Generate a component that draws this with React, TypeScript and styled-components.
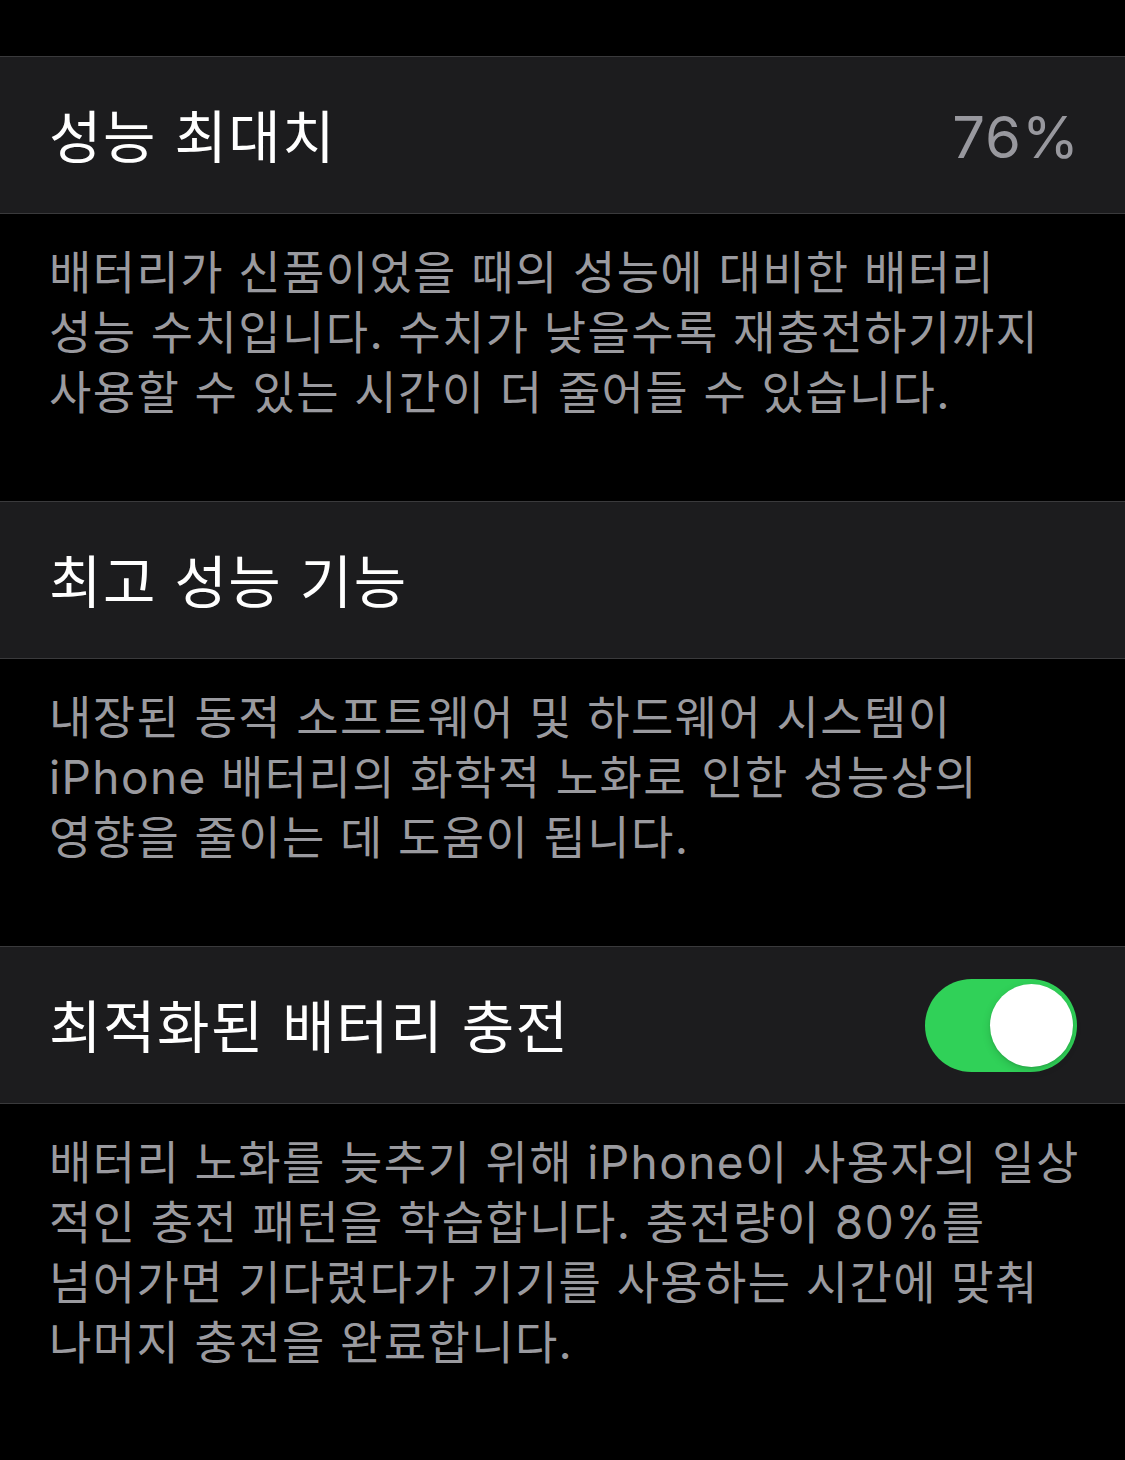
import styled, { createGlobalStyle } from "styled-components";

const GlobalStyle = createGlobalStyle`
  html, body {
    margin: 0;
    padding: 0;
    background: #000;
  }
  body {
    font-family: "Inter", "Noto Sans CJK KR", sans-serif;
    -webkit-font-smoothing: antialiased;
  }
`;

const sections = [
  {
    title: "성능 최대치",
    value: "76%",
    toggle: false,
    footer: [
      "배터리가 신품이었을 때의 성능에 대비한 배터리",
      "성능 수치입니다. 수치가 낮을수록 재충전하기까지",
      "사용할 수 있는 시간이 더 줄어들 수 있습니다.",
    ],
  },
  {
    title: "최고 성능 기능",
    value: "",
    toggle: false,
    footer: [
      "내장된 동적 소프트웨어 및 하드웨어 시스템이",
      "iPhone 배터리의 화학적 노화로 인한 성능상의",
      "영향을 줄이는 데 도움이 됩니다.",
    ],
  },
  {
    title: "최적화된 배터리 충전",
    value: "",
    toggle: true,
    footer: [
      "배터리 노화를 늦추기 위해 iPhone이 사용자의 일상",
      "적인 충전 패턴을 학습합니다. 충전량이 80%를",
      "넘어가면 기다렸다가 기기를 사용하는 시간에 맞춰",
      "나머지 충전을 완료합니다.",
    ],
  },
];

const App = () => {
  return (
    <>
      <GlobalStyle />
      <Screen>
        {sections.map((section, index) => (
          <Section key={index}>
            <Row>
              <RowTitle>{section.title}</RowTitle>
              {section.value && <RowValue>{section.value}</RowValue>}
              {section.toggle && (
                <Switch isOn>
                  <Knob />
                </Switch>
              )}
            </Row>
            <Footer isLast={index === sections.length - 1}>
              {section.footer.map((line, i) => (
                <FooterLine key={i}>{line}</FooterLine>
              ))}
            </Footer>
          </Section>
        ))}
      </Screen>
    </>
  );
};

const Screen = styled.div`
  width: 1125px;
  min-height: 1460px;
  background: #000;
  padding-top: 56px;
  box-sizing: border-box;
  overflow: hidden;
`;

const Section = styled.section`
  display: flex;
  flex-direction: column;
`;

const Row = styled.div`
  height: 158px;
  box-sizing: border-box;
  background: #1c1c1e;
  border-top: 1px solid #3a3a3c;
  border-bottom: 1px solid #3a3a3c;
  display: flex;
  align-items: center;
  padding: 0 48px 0 49px;
`;

const RowTitle = styled.div`
  flex: 1;
  color: #ffffff;
  font-size: 57px;
  letter-spacing: 1.5px;
  line-height: 1;
  margin-top: 4px;
`;

const RowValue = styled.div`
  color: #98989e;
  font-size: 58px;
  line-height: 1;
  letter-spacing: 1px;
  margin: 4px -3px 0 0;
`;

const Switch = styled.div<{ isOn: boolean }>`
  width: 152px;
  height: 93px;
  border-radius: 47px;
  background: ${({ isOn }) => (isOn ? "#30d158" : "#39393d")};
  display: flex;
  align-items: center;
  justify-content: ${({ isOn }) => (isOn ? "flex-end" : "flex-start")};
  padding: 0 4px;
  box-sizing: border-box;
`;

const Knob = styled.div`
  width: 83px;
  height: 83px;
  border-radius: 50%;
  background: #fff;
  box-shadow: 0 3px 8px rgba(0, 0, 0, 0.15), 0 1px 2px rgba(0, 0, 0, 0.1);
`;

const Footer = styled.div<{ isLast: boolean }>`
  padding: 28px 49px ${({ isLast }) => (isLast ? "0" : "79px")};
  color: #9a9a9f;
  font-size: 46px;
  line-height: 60px;
  letter-spacing: 1.4px;
`;

const FooterLine = styled.div`
  white-space: nowrap;
`;

export default App;
